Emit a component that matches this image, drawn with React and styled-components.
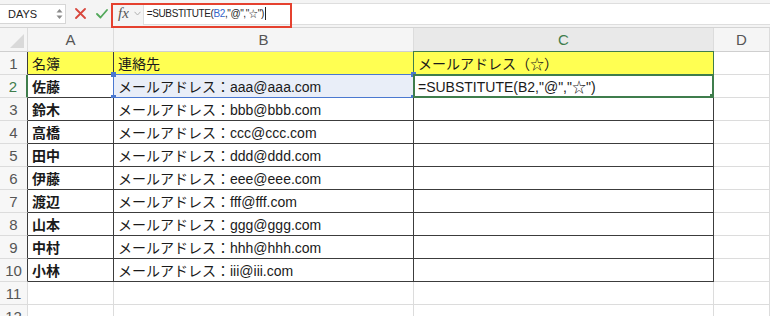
import React from 'react'
import styled, { createGlobalStyle } from 'styled-components'

const GlobalStyle = createGlobalStyle`
  html, body {
    margin: 0;
    padding: 0;
    background: #ffffff;
  }
  body {
    font-family: "Liberation Sans", "Noto Sans CJK JP", sans-serif;
    width: 770px;
    height: 316px;
    overflow: hidden;
  }
`

const columns = ['A', 'B', 'C', 'D']

const rows = [
  { name: '佐藤', mail: 'aaa@aaa.com' },
  { name: '鈴木', mail: 'bbb@bbb.com' },
  { name: '高橋', mail: 'ccc@ccc.com' },
  { name: '田中', mail: 'ddd@ddd.com' },
  { name: '伊藤', mail: 'eee@eee.com' },
  { name: '渡辺', mail: 'fff@fff.com' },
  { name: '山本', mail: 'ggg@ggg.com' },
  { name: '中村', mail: 'hhh@hhh.com' },
  { name: '小林', mail: 'iii@iii.com' },
]

const DARK = '#3c3c3c'
const LIGHT = '#dcdcdc'
const GREEN = '#3f7d4c'
const BLUE = '#4a78d0'

function App() {
  return (
    <>
      <GlobalStyle />
      <Toolbar>
        <NameBox>
          <span>DAYS</span>
          <Spinner>
            <svg width="7" height="12" viewBox="0 0 7 12">
              <path d="M0.5 4.5 L3.5 1 L6.5 4.5 Z" fill="#8a8a8a" />
              <path d="M0.5 7.5 L3.5 11 L6.5 7.5 Z" fill="#8a8a8a" />
            </svg>
          </Spinner>
        </NameBox>
        <IconButton $gap>
          <svg width="11" height="11" viewBox="0 0 11 11">
            <path d="M1 1 L10 10 M10 1 L1 10" stroke="#d8473d" strokeWidth="1.8" strokeLinecap="round" />
          </svg>
        </IconButton>
        <IconButton>
          <svg width="12" height="10" viewBox="0 0 12 10">
            <path d="M1 5 L4.5 8.5 L11 1" stroke="#52a85a" strokeWidth="1.8" fill="none" strokeLinecap="round" strokeLinejoin="round" />
          </svg>
        </IconButton>
        <FormulaArea>
          <Fx>fx</Fx>
          <Chevron>
            <svg width="7" height="5" viewBox="0 0 7 5">
              <path d="M0.5 0.8 L3.5 4 L6.5 0.8" stroke="#b0b0b0" strokeWidth="1" fill="none" />
            </svg>
          </Chevron>
          <FormulaInput>
            =SUBSTITUTE(<Ref>B2</Ref>,"@","<Star>☆</Star>")<Caret />
          </FormulaInput>
          <Highlight />
        </FormulaArea>
      </Toolbar>

      <Sheet>
        <Corner>
          <svg width="14" height="14" viewBox="0 0 14 14">
            <path d="M14 0 L14 14 L0 14 Z" fill="#d9d9d9" />
          </svg>
        </Corner>
        {columns.map((c) => (
          <ColHeader key={c} $active={c === 'C'}>{c}</ColHeader>
        ))}

        <RowHeader $dark>1</RowHeader>
        <Cell $yellow $dark>名簿</Cell>
        <Cell $yellow $dark>連絡先</Cell>
        <Cell $yellow $dark>
          メールアドレス（☆）
          <GreenFrame />
        </Cell>
        <Cell />

        {rows.map((r, i) => {
          const n = i + 2
          const first = n === 2
          return (
            <React.Fragment key={n}>
              <RowHeader $dark $active={first}>{n}</RowHeader>
              <Cell $dark $bold>{r.name}</Cell>
              <Cell $dark $refd={first}>
                メールアドレス：{r.mail}
                {first && (
                  <BlueFrame>
                    <Handle $pos="tl" />
                    <Handle $pos="tr" />
                    <Handle $pos="bl" />
                    <Handle $pos="br" />
                  </BlueFrame>
                )}
              </Cell>
              <Cell $dark>
                {first && (
                  <>
                    =SUBSTITUTE(B2,"@","☆")
                    <ActiveFrame>
                      <Handle $pos="br" $green />
                    </ActiveFrame>
                  </>
                )}
              </Cell>
              <Cell />
            </React.Fragment>
          )
        })}

        {[11, 12].map((n) => (
          <React.Fragment key={n}>
            <RowHeader>{n}</RowHeader>
            <Cell />
            <Cell />
            <Cell />
            <Cell />
          </React.Fragment>
        ))}
      </Sheet>
    </>
  )
}

export default App

const Toolbar = styled.div`
  display: flex;
  align-items: center;
  height: 27px;
  background: #f4f4f4;
  border-bottom: 1px solid #d4d4d4;
  box-sizing: content-box;
`

const NameBox = styled.div`
  display: flex;
  align-items: center;
  justify-content: space-between;
  width: 66px;
  height: 20px;
  box-sizing: border-box;
  padding: 0 2px 0 8px;
  background: #ffffff;
  border: 1px solid #d6d6d6;
  border-left: none;
  font-size: 11px;
  color: #222;
`

const Spinner = styled.div`
  display: flex;
  align-items: center;
`

const IconButton = styled.div`
  display: flex;
  align-items: center;
  justify-content: center;
  width: 22px;
  height: 20px;
  margin-left: ${(p) => (p.$gap ? '3px' : '0')};
`

const FormulaArea = styled.div`
  position: relative;
  flex: 1;
  display: flex;
  align-items: center;
  height: 27px;
`

const Fx = styled.span`
  font-family: "Liberation Serif", serif;
  font-style: italic;
  font-size: 15px;
  color: #555;
  margin-left: 5px;
`

const Chevron = styled.span`
  display: flex;
  align-items: center;
  margin-left: 5px;
`

const FormulaInput = styled.div`
  flex: 1;
  display: flex;
  align-items: center;
  height: 20px;
  margin-left: 2px;
  padding-left: 3px;
  background: #ffffff;
  border-top: 1px solid #dedede;
  border-bottom: 1px solid #dedede;
  border-left: 1px solid #dedede;
  font-size: 10px;
  letter-spacing: -0.4px;
  color: #222;
  white-space: pre;
`

const Ref = styled.span`
  color: #3465c8;
`

const Star = styled.span`
  font-size: 9px;
  letter-spacing: 0;
`

const Caret = styled.span`
  display: inline-block;
  width: 1px;
  height: 13px;
  margin-left: 1px;
  background: #222;
`

const Highlight = styled.div`
  position: absolute;
  left: -2px;
  top: 3px;
  width: 181px;
  height: 25px;
  box-sizing: border-box;
  border: 2px solid #e5412f;
  pointer-events: none;
`

const Sheet = styled.div`
  display: grid;
  grid-template-columns: 28px 86px 300px 300px 1fr;
  grid-template-rows: 24px;
  grid-auto-rows: 23px;
`

const Corner = styled.div`
  display: flex;
  align-items: flex-end;
  justify-content: flex-end;
  padding: 0 3px 3px 0;
  background: #f5f5f5;
  border-right: 1px solid ${LIGHT};
  border-bottom: 1px solid #cfcfcf;
  box-sizing: border-box;
`

const ColHeader = styled.div`
  display: flex;
  align-items: center;
  justify-content: center;
  background: ${(p) => (p.$active ? '#e9e9e9' : '#f5f5f5')};
  color: ${(p) => (p.$active ? GREEN : '#555')};
  border-right: 1px solid ${LIGHT};
  border-bottom: 1px solid ${(p) => (p.$active ? GREEN : '#cfcfcf')};
  box-sizing: border-box;
  font-size: 15px;
`

const RowHeader = styled.div`
  display: flex;
  align-items: center;
  justify-content: center;
  background: #f7f7f7;
  color: ${(p) => (p.$active ? GREEN : '#555')};
  border-right: ${(p) => (p.$active ? `2px solid ${GREEN}` : `1px solid ${p.$dark ? DARK : LIGHT}`)};
  border-bottom: 1px solid ${LIGHT};
  box-sizing: border-box;
  font-size: 15px;
`

const Cell = styled.div`
  position: relative;
  display: flex;
  align-items: center;
  padding-left: 4px;
  background: ${(p) => (p.$yellow ? '#ffff52' : p.$refd ? '#e9eef8' : '#ffffff')};
  border-right: 1px solid ${(p) => (p.$dark ? DARK : LIGHT)};
  border-bottom: 1px solid ${(p) => (p.$dark ? DARK : LIGHT)};
  box-sizing: border-box;
  font-family: "Liberation Sans", "Noto Sans CJK JP", sans-serif;
  font-size: 14px;
  font-weight: ${(p) => (p.$bold ? 600 : 400)};
  color: #1a1a1a;
  white-space: nowrap;
`

const GreenFrame = styled.div`
  position: absolute;
  left: -1px;
  top: -1px;
  right: -1px;
  bottom: 0;
  border: 1px solid ${GREEN};
  border-bottom: none;
  pointer-events: none;
`

const ActiveFrame = styled.div`
  position: absolute;
  left: -1px;
  top: -1px;
  right: -1px;
  bottom: -1px;
  border: 2px solid ${GREEN};
  pointer-events: none;
`

const BlueFrame = styled.div`
  position: absolute;
  left: -1px;
  top: -1px;
  right: -1px;
  bottom: -1px;
  border: 1.5px solid ${BLUE};
  pointer-events: none;
`

const Handle = styled.span`
  position: absolute;
  width: 5px;
  height: 5px;
  background: ${(p) => (p.$green ? GREEN : BLUE)};
  ${(p) => (p.$pos[0] === 't' ? 'top: -3px;' : 'bottom: -3px;')}
  ${(p) => (p.$pos[1] === 'l' ? 'left: -3px;' : 'right: -3px;')}
`
